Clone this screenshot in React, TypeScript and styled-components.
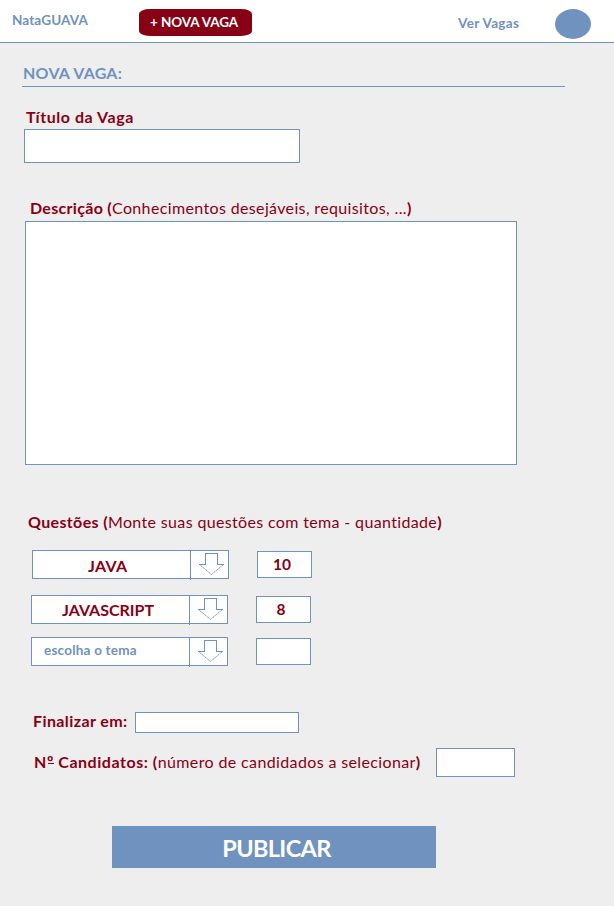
import React from 'react';
import styled, { createGlobalStyle } from 'styled-components';

const blue = '#7092be';
const wine = '#880015';

const GlobalStyle = createGlobalStyle`
  body {
    margin: 0;
    background: #eeeeee;
    font-family: Lato, 'Open Sans', sans-serif;
  }
  * { box-sizing: border-box; }
`;

const Page = styled.div`
  width: 614px;
  height: 906px;
  overflow: hidden;
  background: #eeeeee;
`;

const Header = styled.header`
  display: flex;
  align-items: flex-start;
  height: 43px;
  background: #fff;
  border-bottom: 1px solid ${blue};
`;

const Text = styled.span<{ $size?: number; $spacing?: number; $light?: boolean; $color?: string }>`
  font-size: ${p => p.$size ?? 16}px;
  font-weight: ${p => (p.$light ? 400 : 700)};
  font-variant-ligatures: none;
  letter-spacing: ${p => p.$spacing ?? 0}px;
  color: ${p => p.$color ?? wine};
  line-height: 20px;
  white-space: pre;
`;

const Ordinal = styled.span`
  background: linear-gradient(${wine}, ${wine}) 1px 11px / 6px 1px no-repeat;
`;

const Brand = styled.div`
  display: flex;
  width: 139px;
  padding: 10px 0 0 12px;
`;

const NewButton = styled.button`
  display: flex;
  width: 113px;
  height: 27px;
  margin: 9px 0 0;
  padding: 3px 0 0 11px;
  border: 0;
  border-radius: 11px / 5px;
  background: ${wine};
  font-family: inherit;
`;

const NavLink = styled.a`
  display: flex;
  width: 97px;
  margin: 13px 0 0 206px;
`;

const Avatar = styled.div`
  width: 36px;
  height: 30px;
  margin-top: 9px;
  border-radius: 50%;
  background: ${blue};
`;

const Form = styled.main`
  display: flex;
  flex-direction: column;
  align-items: flex-start;
  padding-top: 20px;
`;

const Heading = styled.h1`
  display: flex;
  width: 543px;
  height: 24px;
  margin: 0 0 0 22px;
  padding-left: 1px;
  border-bottom: 1px solid ${blue};
`;

const Label = styled.div<{ $top: number; $left: number }>`
  display: flex;
  height: 20px;
  margin: ${p => p.$top}px 0 0 ${p => p.$left}px;
`;

const Box = styled.div<{ $w: number; $h: number; $top?: number; $left?: number }>`
  display: flex;
  flex: none;
  width: ${p => p.$w}px;
  height: ${p => p.$h}px;
  margin: ${p => p.$top ?? 0}px 0 0 ${p => p.$left ?? 0}px;
  border: 1px solid ${blue};
  background: #fff;
`;

const Row = styled.div<{ $top: number; $left: number }>`
  display: flex;
  align-items: flex-start;
  margin: ${p => p.$top}px 0 0 ${p => p.$left}px;
`;

const Theme = styled.div<{ $pad: number; $top: number }>`
  display: flex;
  width: 157px;
  padding: ${p => p.$top}px 0 0 ${p => p.$pad}px;
`;

const ArrowCell = styled.div`
  width: 38px;
  height: 29px;
  border-left: 1px solid ${blue};
`;

const Quantity = styled(Box)`
  justify-content: center;
  padding: 2px 5px 0 0;
`;

const RowLabel = styled.div<{ $w: number; $top: number }>`
  display: flex;
  width: ${p => p.$w}px;
  margin-top: ${p => p.$top}px;
`;

const Publish = styled.button`
  display: flex;
  justify-content: center;
  align-items: center;
  width: 324px;
  height: 42px;
  margin: 49px 0 0 112px;
  padding: 2px 0 0 5px;
  border: 0;
  background: ${blue};
  font-family: inherit;
`;

const Arrow = () => (
  <svg width="37" height="27" viewBox="0 0 37 27" fill="none" stroke={blue} display="block">
    <path d="M8 13.5H14.5V2.5H26.5V13.5H33" shapeRendering="crispEdges" />
    <path d="M8.5 13.5L20.5 23.5L32.5 13.5" strokeDasharray="1.5 0.6" />
  </svg>
);

interface QuestionProps {
  theme: string;
  pad: number;
  textTop: number;
  top: number;
  left: number;
  quantity?: string;
  spacing: number;
  placeholder?: boolean;
}

const Question = ({ theme, pad, textTop, top, left, quantity, spacing, placeholder }: QuestionProps) => (
  <Row $top={top} $left={left}>
    <Box $w={197} $h={29}>
      <Theme $pad={pad} $top={textTop}>
        <Text $size={placeholder ? 13.5 : 16} $color={placeholder ? blue : wine} $spacing={spacing}>{theme}</Text>
      </Theme>
      <ArrowCell><Arrow /></ArrowCell>
    </Box>
    <Quantity $w={55} $h={27} $top={1} $left={28}>
      {quantity && <Text $size={15.5}>{quantity}</Text>}
    </Quantity>
  </Row>
);

export default function App() {
  return (
    <Page>
      <GlobalStyle />
      <Header>
        <Brand><Text $size={13.5} $spacing={0.12} $color={blue}>NataGUAVA</Text></Brand>
        <NewButton><Text $size={13.5} $spacing={-0.1} $color="#fff">+ NOVA VAGA</Text></NewButton>
        <NavLink><Text $size={13.5} $spacing={0.35} $color={blue}>Ver Vagas</Text></NavLink>
        <Avatar />
      </Header>
      <Form>
        <Heading><Text $spacing={0.25} $color={blue}>NOVA VAGA:</Text></Heading>

        <Label $top={20} $left={26}><Text $spacing={0.55}>Título da Vaga</Text></Label>
        <Box $w={276} $h={34} $top={2} $left={24} />

        <Label $top={35} $left={30}>
          <Text $spacing={0.3}>Descrição (</Text>
          <Text $light $spacing={0.36}>Conhecimentos desejáveis, requisitos, ...</Text>
          <Text>)</Text>
        </Label>
        <Box $w={492} $h={244} $top={3} $left={25} />

        <Label $top={47} $left={28}>
          <Text $spacing={0.36}>Questões (</Text>
          <Text $light $spacing={0.35}>Monte suas questões com tema - quantidade</Text>
          <Text>)</Text>
        </Label>
        <Question theme="JAVA" pad={55} textTop={5} top={18} left={32} quantity="10" spacing={0.3} />
        <Question theme="JAVASCRIPT" pad={30} textTop={4} top={16} left={31} quantity="8" spacing={0} />
        <Question theme="escolha o tema" pad={12} textTop={2} top={13} left={31} spacing={0.22} placeholder />

        <Row $top={46} $left={33}>
          <RowLabel $w={102} $top={-1}><Text $spacing={0.4}>Finalizar em:</Text></RowLabel>
          <Box $w={164} $h={21} />
        </Row>
        <Row $top={15} $left={34}>
          <RowLabel $w={402} $top={4}>
            <Text $spacing={0.54}>N<Ordinal>º</Ordinal> Candidatos: (</Text>
            <Text $light $spacing={0.37}>número de candidados a selecionar</Text>
            <Text>)</Text>
          </RowLabel>
          <Box $w={79} $h={29} />
        </Row>

        <Publish><Text $size={23.5} $spacing={-0.65} $color="#fff">PUBLICAR</Text></Publish>
      </Form>
    </Page>
  );
}
